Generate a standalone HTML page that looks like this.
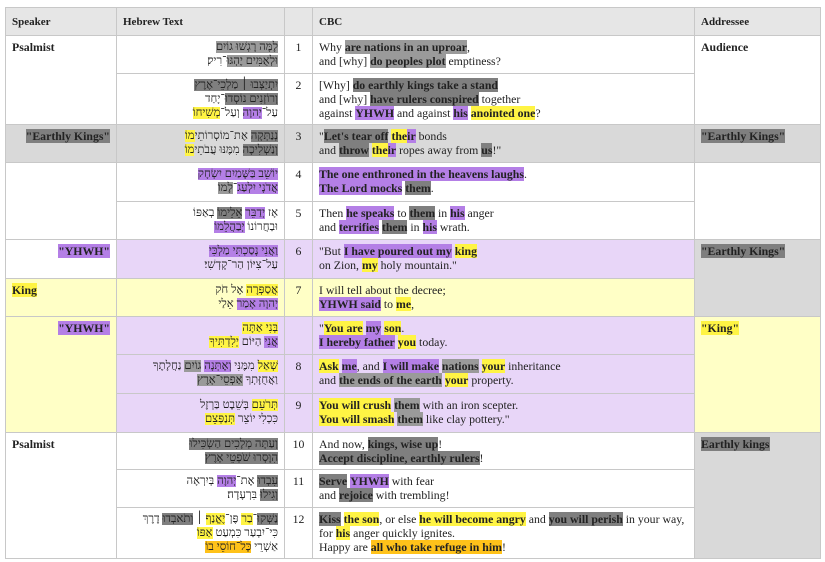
<!DOCTYPE html>
<html><head><meta charset="utf-8"><style>
body{margin:0;background:#fff;font-family:"Liberation Serif",serif;font-size:11.8px;color:#222;}
table{position:absolute;left:5px;top:7px;width:815px;border-collapse:collapse;table-layout:fixed;}
td,th{border:1px solid #c8c8c8;vertical-align:top;padding:4px 6px;line-height:14px;overflow:hidden;white-space:nowrap;}
th{background:#e6e6e6;text-align:left;font-weight:bold;height:19px;vertical-align:middle;font-size:11px}
.he{direction:rtl;text-align:right;font-family:"Liberation Serif","DejaVu Sans",serif;font-size:11.5px}
.n{text-align:center;}
b{font-weight:bold}
.g{background:#9a9a9a}.dg{background:#7f7f7f}.p{background:#b47fe6}.y{background:#fff444}.o{background:#ffc21a}
.rg{background:#d9d9d9}.rp{background:#e8d6f8}.ry{background:#ffffc6}
.r{text-align:right}
</style></head><body>
<table>
<colgroup><col style="width:111px"><col style="width:168px"><col style="width:28px"><col style="width:382px"><col style="width:126px"></colgroup>
<tr><th>Speaker</th><th>Hebrew Text</th><th></th><th>CBC</th><th>Addressee</th></tr>
<tr style="height:38px"><td rowspan="2"><b>Psalmist</b></td><td class="he"><span class="g">לָמָּה רָגְשׁוּ גוֹיִם</span><br><span class="g">וּלְאֻמִּים יֶהְגּוּ</span>־רִיק׃</td><td class="n">1</td><td>Why <b class="g">are nations in an uproar</b>,<br>and [why] <b class="g">do peoples plot</b> emptiness?</td><td rowspan="2"><b>Audience</b></td></tr>
<tr style="height:51px"><td class="he"><span class="dg">יִתְיַצְּבוּ ׀ מַלְכֵי־אֶרֶץ</span><br><span class="dg">וְרוֹזְנִים נוֹסְדוּ</span>־יָחַד<br>עַל־<span class="p">יְהוָה</span> וְעַל־<span class="y">מְשִׁיחוֹ</span>׃</td><td class="n">2</td><td>[Why] <b class="dg">do earthly kings take a stand</b><br>and [why] <b class="dg">have rulers conspired</b> together<br>against <b class="p">YHWH</b> and against <b class="p">his</b> <b class="y">anointed one</b>?</td></tr>
<tr style="height:38px" class="rg"><td class="r"><b class="dg">"Earthly Kings"</b></td><td class="he"><span class="dg">נְנַתְּקָה</span> אֶת־מוֹסְרוֹתֵי<span class="y">מוֹ</span><br><span class="dg">וְנַשְׁלִיכָה</span> מִמֶּנּוּ עֲבֹתֵי<span class="y">מוֹ</span>׃</td><td class="n">3</td><td>"<b class="dg">Let's tear off</b> <b class="y">the</b><b class="p">ir</b> bonds<br>and <b class="dg">throw</b> <b class="y">the</b><b class="p">ir</b> ropes away from <b class="dg">us</b>!"</td><td><b class="dg">"Earthly Kings"</b></td></tr>
<tr style="height:39px"><td rowspan="2"></td><td class="he"><span class="p">יוֹשֵׁב בַּשָּׁמַיִם יִשְׂחָק</span><br><span class="p">אֲדֹנָי יִלְעַג</span>־<span class="g">לָמוֹ</span>׃</td><td class="n">4</td><td><b class="p">The one enthroned in the heavens laughs</b>.<br><b class="p">The Lord mocks</b> <b class="dg">them</b>.</td><td rowspan="2"></td></tr>
<tr style="height:38px"><td class="he">אָז <span class="p">יְדַבֵּר</span> <span class="dg">אֵלֵימוֹ</span> בְאַפּוֹ<br>וּבַחֲרוֹנוֹ <span class="p">יְבַהֲלֵמוֹ</span>׃</td><td class="n">5</td><td>Then <b class="p">he speaks</b> to <b class="dg">them</b> in <b class="p">his</b> anger<br>and <b class="p">terrifies</b> <b class="dg">them</b> in <b class="p">his</b> wrath.</td></tr>
<tr style="height:39px"><td class="r"><b class="p">"YHWH"</b></td><td class="he rp"><span class="p">וַאֲנִי נָסַכְתִּי מַלְכִּי</span><br>עַל־צִיּוֹן הַר־קָדְשִׁי׃</td><td class="n rp">6</td><td class="rp">"But <b class="p">I have poured out my</b> <b class="y">king</b><br>on Zion, <b class="y">my</b> holy mountain."</td><td rowspan="2" class="rg"><b class="dg">"Earthly Kings"</b></td></tr>
<tr style="height:38px" class="ry"><td><b class="y">King</b></td><td class="he"><span class="y">אֲסַפְּרָה</span> אֶל חֹק<br><span class="p">יְהוָה אָמַר</span> אֵלַי</td><td class="n">7</td><td>I will tell about the decree;<br><b class="p">YHWH said</b> to <b class="y">me</b>,</td></tr>
<tr style="height:38px"><td rowspan="3" class="ry r"><b class="p">"YHWH"</b></td><td class="he rp"><span class="y">בְּנִי אַתָּה</span><br><span class="p">אֲנִי</span> הַיּוֹם <span class="y">יְלִדְתִּיךָ</span>׃</td><td class="rp"></td><td class="rp">"<b class="y">You are</b> <b class="p">my</b> <b class="y">son</b>.<br><b class="p">I hereby father</b> <b class="y">you</b> today.</td><td rowspan="3" class="ry"><b class="y">"King"</b></td></tr>
<tr style="height:39px" class="rp"><td class="he"><span class="y">שְׁאַל</span> מִמֶּנִּי <span class="p">וְאֶתְּנָה</span> <span class="g">גוֹיִם</span> נַחֲלָתֶךָ<br>וַאֲחֻזָּתְךָ <span class="g">אַפְסֵי־אָרֶץ</span>׃</td><td class="n">8</td><td><b class="y">Ask</b> <b class="p">me</b>, and <b class="p">I will make</b> <b class="g">nations</b> <b class="y">your</b> inheritance<br>and <b class="g">the ends of the earth</b> <b class="y">your</b> property.</td></tr>
<tr style="height:39px" class="rp"><td class="he"><span class="y">תְּרֹעֵם</span> בְּשֵׁבֶט בַּרְזֶל<br>כִּכְלִי יוֹצֵר <span class="y">תְּנַפְּצֵם</span>׃</td><td class="n">9</td><td><b class="y">You will crush</b> <b class="g">them</b> with an iron scepter.<br><b class="y">You will smash</b> <b class="g">them</b> like clay pottery."</td></tr>
<tr style="height:37px"><td rowspan="3"><b>Psalmist</b></td><td class="he"><span class="dg">וְעַתָּה מְלָכִים הַשְׂכִּילוּ</span><br><span class="dg">הִוָּסְרוּ שֹׁפְטֵי אָרֶץ</span>׃</td><td class="n">10</td><td>And now, <b class="dg">kings, wise up</b>!<br><b class="dg">Accept discipline, earthly rulers</b>!</td><td rowspan="3" class="rg"><b class="dg">Earthly kings</b></td></tr>
<tr style="height:38px"><td class="he"><span class="dg">עִבְדוּ</span> אֶת־<span class="p">יְהוָה</span> בְּיִרְאָה<br><span class="dg">וְגִילוּ</span> בִּרְעָדָה׃</td><td class="n">11</td><td><b class="dg">Serve</b> <b class="p">YHWH</b> with fear<br>and <b class="dg">rejoice</b> with trembling!</td></tr>
<tr style="height:50px"><td class="he"><span class="dg">נַשְּׁקוּ</span>־<span class="y">בַר</span> פֶּן־<span class="y">יֶאֱנַף</span> ׀ <span class="dg">וְתֹאבְדוּ</span> דֶרֶךְ<br>כִּי־יִבְעַר כִּמְעַט <span class="y">אַפּוֹ</span><br>אַשְׁרֵי <span class="o">כָּל־חוֹסֵי בוֹ</span>׃</td><td class="n">12</td><td><b class="dg">Kiss</b> <b class="y">the son</b>, or else <b class="y">he will become angry</b> and <b class="dg">you will perish</b> in your way,<br>for <b class="y">his</b> anger quickly ignites.<br>Happy are <b class="o">all who take refuge in him</b>!</td></tr>
</table>
</body></html>
